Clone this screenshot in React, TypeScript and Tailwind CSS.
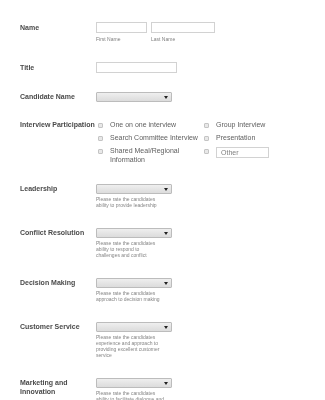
import React from "react";

const Select = () => (
  <div className="relative w-[76px] h-[10px] border border-[#bcbcbc] rounded-[1px] bg-gradient-to-b from-[#efefef] to-[#dcdcdc]">
    <svg className="absolute right-[3px] top-[3px]" width="4" height="3" viewBox="0 0 4 3">
      <polygon points="0,0 4,0 2,3" fill="#222" />
    </svg>
  </div>
);

const Check = () => (
  <div className="w-[5px] h-[5px] shrink-0 mt-[2px] border border-[#c4c4c4] bg-[#e8e8e8] rounded-[1px]" />
);

const Option = ({ children }: { children: React.ReactNode }) => (
  <div className="flex items-start gap-[7px]">
    <Check />
    <div className="text-[7px] leading-[8.5px] text-[#5e5e5e]">{children}</div>
  </div>
);

const Section = ({ label, help }: { label: React.ReactNode; help: string[] }) => (
  <div className="flex mb-[20px]">
    <div className="w-[76px] shrink-0 text-[7px] font-bold leading-[8.5px] pt-[1px] text-[#4a4a4a]">{label}</div>
    <div>
      <Select />
      <div className="mt-[2px] w-[72px] text-[5px] leading-[6px] text-[#858585]">
        {help.map((h, i) => (
          <div key={i}>{h}</div>
        ))}
      </div>
    </div>
  </div>
);

export default function App() {
  return (
    <div className="w-[325px] h-[400px] overflow-hidden bg-white">
      <div
        className="pl-[20px] pt-[22px] [will-change:transform]"
        style={{ fontFamily: '"Liberation Sans", Arial, sans-serif' }}
      >
        {/* Name */}
        <div className="flex mb-[20px]">
          <div className="w-[76px] shrink-0 text-[7px] font-bold leading-[11px] text-[#4a4a4a]">Name</div>
          <div className="flex gap-[4px]">
            <div>
              <div className="w-[51px] h-[11px] border border-[#d2d2d2] bg-white" />
              <div className="mt-[3px] text-[5px] leading-[6px] text-[#808080]">First Name</div>
            </div>
            <div>
              <div className="w-[64px] h-[11px] border border-[#d2d2d2] bg-white" />
              <div className="mt-[3px] text-[5px] leading-[6px] text-[#808080]">Last Name</div>
            </div>
          </div>
        </div>

        {/* Title */}
        <div className="flex mb-[19px]">
          <div className="w-[76px] shrink-0 text-[7px] font-bold leading-[11px] text-[#4a4a4a]">Title</div>
          <div className="w-[81px] h-[11px] border border-[#d2d2d2] bg-white" />
        </div>

        {/* Candidate Name */}
        <div className="flex mb-[19px]">
          <div className="w-[76px] shrink-0 text-[7px] font-bold leading-[10px] text-[#4a4a4a]">Candidate Name</div>
          <Select />
        </div>

        {/* Interview Participation */}
        <div className="flex mb-[20px]">
          <div className="w-[78px] shrink-0 text-[7px] font-bold leading-[8.5px] text-[#4a4a4a] whitespace-nowrap">
            Interview Participation
          </div>
          <div className="grid grid-cols-[106px_1fr] gap-y-[4.5px]">
            <Option>One on one interview</Option>
            <Option>Group Interview</Option>
            <Option>Search Committee Interview</Option>
            <Option>Presentation</Option>
            <Option>
              Shared Meal/Regional
              <br />
              Information
            </Option>
            <div className="flex items-start gap-[7px]">
              <Check />
              <div className="w-[53px] h-[11px] border border-[#d2d2d2] bg-white text-[7px] leading-[9px] pl-[4px] text-[#808080]">
                Other
              </div>
            </div>
          </div>
        </div>

        <Section label="Leadership" help={["Please rate the candidates", "ability to provide leadership"]} />
        <Section
          label="Conflict Resolution"
          help={["Please rate the candidates", "ability to respond to", "challenges and conflict"]}
        />
        <Section label="Decision Making" help={["Please rate the candidates", "approach to decision making"]} />
        <Section
          label="Customer Service"
          help={["Please rate the candidates", "experience and approach to", "providing excellent customer", "service"]}
        />
        <Section
          label={
            <>
              Marketing and
              <br />
              Innovation
            </>
          }
          help={["Please rate the candidates", "ability to facilitate dialogue and", "foster innovation"]}
        />
      </div>
    </div>
  );
}
